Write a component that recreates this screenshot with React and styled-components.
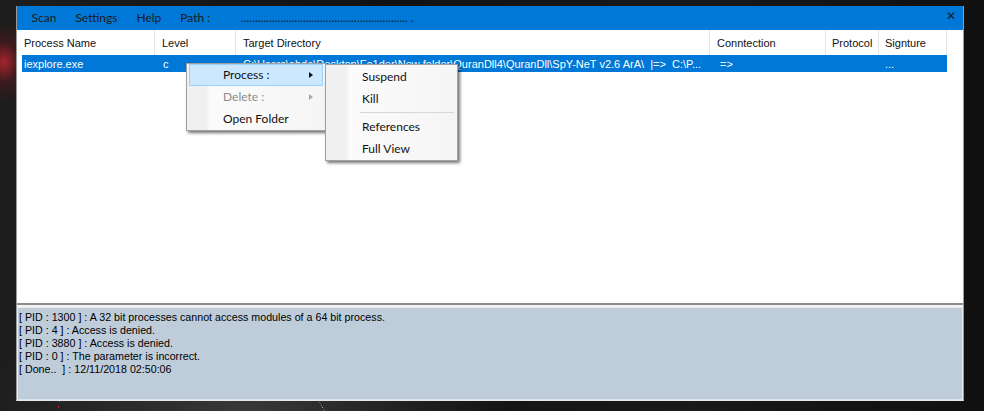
import React from "react";
import styled, { createGlobalStyle } from "styled-components";

const Global = createGlobalStyle`
  html, body { margin: 0; padding: 0; background: #151515; }
  * { box-sizing: border-box; }
`;

const Desk = styled.div`
  position: relative;
  width: 984px;
  height: 411px;
  overflow: hidden;
  background:
    radial-gradient(ellipse 30px 40px at 4px 62px, rgba(210,40,50,0.75) 0, rgba(120,20,30,0.35) 50%, transparent 100%),
    linear-gradient(100deg, transparent 0 48%, rgba(230,30,40,0.9) 49%, rgba(230,30,40,0.9) 50%, transparent 51%) 52px 398px / 14px 13px no-repeat,
    linear-gradient(60deg, transparent 0 48%, rgba(220,220,220,0.8) 49%, transparent 51%) 314px 398px / 14px 13px no-repeat,
    radial-gradient(ellipse at 25% 100%, #383838 0, transparent 25%),
    linear-gradient(90deg, #1d1d1d 0, #121212 40%, #191919 70%, #101010 100%);
  padding: 6px 0 0 16px;
  font-family: "Liberation Sans", Arial, sans-serif;
`;

const Window = styled.div`
  width: 948px;
  height: 395px;
  display: flex;
  flex-direction: column;
  background: #ffffff;
  border-left: 1px solid #9a9a9a;
  border-right: 1px solid #9a9a9a;
  border-bottom: 1px solid #e8e8e8;
`;

const MenuBar = styled.div`
  height: 24px;
  flex: none;
  background: #0078d7;
  display: flex;
  align-items: center;
  padding-left: 5px;
  padding-bottom: 1px;
  font-family: Lato, "Open Sans", sans-serif;
  font-size: 12px;
  color: #1b1b1b;
  position: relative;
`;

const MenuItem = styled.span`
  padding: 0 ${(p) => p.$pad ?? 9.5}px;
  margin-right: ${(p) => p.$mr || 0}px;
  white-space: pre;
`;

const Close = styled.span`
  position: absolute;
  right: 7px;
  top: 3px;
  font-family: "DejaVu Sans", sans-serif;
  font-weight: bold;
  font-size: 12px;
  color: #0c1a2a;
`;

const ListArea = styled.div`
  flex: 1;
  display: flex;
  flex-direction: column;
  background: #fff;
  border-bottom: 2px solid #8c8c8c;
`;

const Header = styled.div`
  display: flex;
  height: 25px;
  align-items: center;
  font-size: 11px;
  color: #111;
`;

const HCell = styled.div`
  width: ${(p) => p.$w}px;
  height: 100%;
  display: flex;
  align-items: center;
  padding-left: ${(p) => p.$pl || 7}px;
  border-right: 1px solid #e5e5e5;
  white-space: nowrap;
  overflow: hidden;
`;

const Row = styled.div`
  display: flex;
  height: 17px;
  margin-left: 5px;
  width: 925px;
  background: #0078d7;
  color: #fff;
  font-size: 11px;
  align-items: center;
`;

const Cell = styled.div`
  width: ${(p) => p.$w}px;
  padding-left: ${(p) => p.$pl || 2}px;
  white-space: pre;
  overflow: hidden;
`;

const Gap = styled.div`
  height: 2px;
  background: #f2f2f2;
  flex: none;
`;

const Log = styled.div`
  height: 93px;
  flex: none;
  background: #bfcddb;
  border: 1px solid #e9ecef;
  border-bottom-color: #dde3ea;
  padding: 3px 0 0 1px;
  font-size: 10.7px;
  line-height: 13px;
  color: #000;
`;

const LogLine = styled.div`
  white-space: pre;
`;

const Menu = styled.div`
  position: absolute;
  left: ${(p) => p.$x}px;
  top: ${(p) => p.$y}px;
  width: ${(p) => p.$w}px;
  padding: ${(p) => p.$pt || 0}px 2px 0 2px;
  background: linear-gradient(90deg, #f0f0f0 0, #f0f0f0 19px, #fbfbfb 24px, #f5f5f5 100%);
  border: 1px solid #a0a0a0;
  box-shadow: 2px 2px 3px rgba(0, 0, 0, 0.55);
  font-family: Lato, "Open Sans", sans-serif;
  font-size: 12px;
  color: #111;
`;

const MItem = styled.div`
  height: 22px;
  display: flex;
  align-items: center;
  padding-left: ${(p) => p.$pl}px;
  padding-bottom: 1px;
  position: relative;
  color: ${(p) => (p.$disabled ? "#8d8d8d" : "#111")};
  background: ${(p) => (p.$active ? "#cce8ff" : "transparent")};
  border: 1px solid ${(p) => (p.$active ? "#99d1ff" : "transparent")};
`;

const Arrow = styled.span`
  position: absolute;
  right: 9px;
  top: 7px;
  width: 0;
  height: 0;
  border-top: 3.5px solid transparent;
  border-bottom: 3.5px solid transparent;
  border-left: 4px solid ${(p) => (p.$disabled ? "#a8a8a8" : "#111")};
`;

const Sep = styled.div`
  height: 1px;
  margin: 2px 1px 3px 32px;
  background: #d7d7d7;
`;

export default function App() {
  return (
    <>
      <Global />
      <Desk>
        <Window>
          <MenuBar>
            <MenuItem>Scan</MenuItem>
            <MenuItem>Settings</MenuItem>
            <MenuItem>Help</MenuItem>
            <MenuItem $mr={21}>Path :</MenuItem>
            <MenuItem $pad={0}>{"........................................................... ."}</MenuItem>
            <Close>✕</Close>
          </MenuBar>
          <ListArea>
            <Header>
              <HCell $w={138}>Process Name</HCell>
              <HCell $w={81}>Level</HCell>
              <HCell $w={474}>Target Directory</HCell>
              <HCell $w={116}>Conntection</HCell>
              <HCell $w={53} $pl={6}>Protocol</HCell>
              <HCell $w={68} $pl={6}>Signture</HCell>
            </Header>
            <Row>
              <Cell $w={133}>iexplore.exe</Cell>
              <Cell $w={81} $pl={8}>c</Cell>
              <Cell $w={474} $pl={7}>{"C:\\Users\\abdo\\Desktop\\Fo1der\\New folder\\QuranDll4\\QuranDll\\SpY-NeT v2.6 ArA\\  |=>  C:\\P..."}</Cell>
              <Cell $w={116} $pl={10}>{"=>"}</Cell>
              <Cell $w={53}></Cell>
              <Cell $w={68} $pl={6}>...</Cell>
            </Row>
          </ListArea>
          <Gap />
          <Log>
            <LogLine>[ PID : 1300 ] : A 32 bit processes cannot access modules of a 64 bit process.</LogLine>
            <LogLine>[ PID : 4 ] : Access is denied.</LogLine>
            <LogLine>[ PID : 3880 ] : Access is denied.</LogLine>
            <LogLine>[ PID : 0 ] : The parameter is incorrect.</LogLine>
            <LogLine>[ Done..  ] : 12/11/2018 02:50:06</LogLine>
          </Log>
        </Window>

        <Menu $x={186} $y={63} $w={140}>
          <MItem $pl={33} $active>
            Process :<Arrow />
          </MItem>
          <MItem $pl={33} $disabled>
            Delete :<Arrow $disabled />
          </MItem>
          <MItem $pl={33}>Open Folder</MItem>
        </Menu>

        <Menu $x={325} $y={64} $w={133} $pt={1}>
          <MItem $pl={33}>Suspend</MItem>
          <MItem $pl={33}>Kill</MItem>
          <Sep />
          <MItem $pl={33}>References</MItem>
          <MItem $pl={33}>Full View</MItem>
        </Menu>
      </Desk>
    </>
  );
}
